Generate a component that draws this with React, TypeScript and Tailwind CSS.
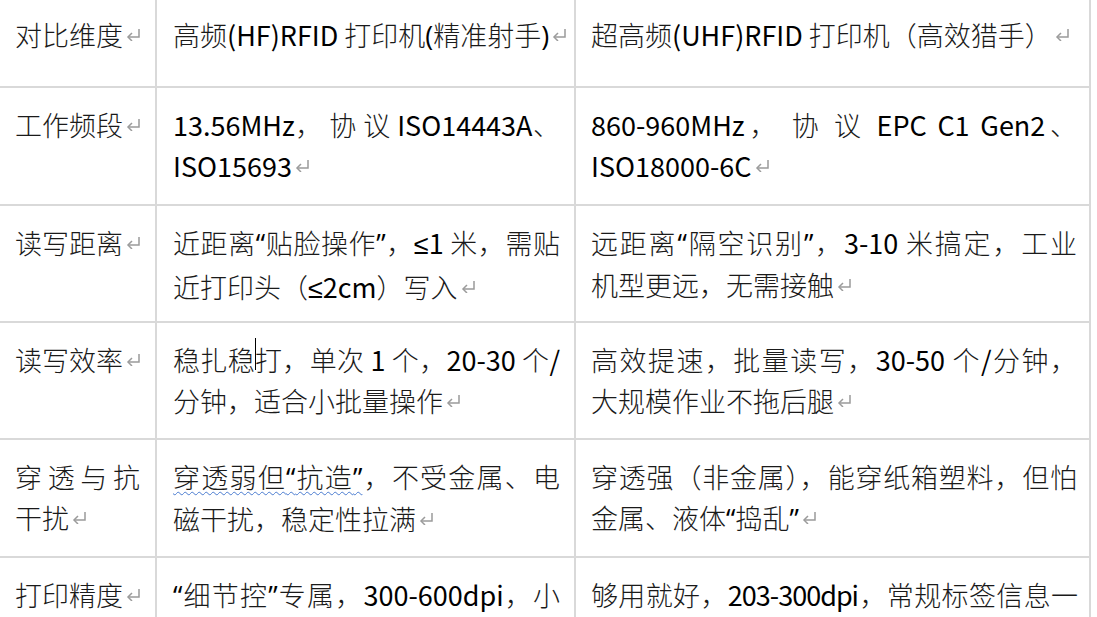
import type { ReactNode } from "react";

const Ret = () => (
  <svg
    className="ml-[3px] inline-block h-[13px] w-[15px] align-[5px]"
    viewBox="0 0 15 13"
    fill="none"
    stroke="#9b9b9b"
    strokeWidth={1.5}
  >
    <path d="M13 1v8H2" />
    <path d="M6 5L2 9l4 4" />
  </svg>
);

// latin runs get a regular weight, like the Calibri parts of the doc
const fmt = (s: string): ReactNode[] =>
  s.split(/([\x21-\x7E]+)/).map((p, i) =>
    /[\x21-\x7E]/.test(p) ? (
      <span key={i} className="font-normal text-black">
        {p}
      </span>
    ) : (
      p
    ),
  );

const Q = ({ children }: { children: ReactNode }) => (
  <span className="font-['Open_Sans'] font-normal text-black">{children}</span>
);

const Le = () => <span className="font-['Liberation_Sans'] font-normal text-black">≤</span>;

const Caret = () => (
  <span className="relative">
    <span className="absolute left-0 top-[-2px] h-[32px] w-px bg-black" />
  </span>
);

type Line = string | ReactNode;

function Cell({ lines, first, pad, clip, cont }: { lines: Line[]; first?: boolean; pad: string; clip?: boolean; cont?: boolean }) {
  return (
    <div
      className={`border-b-2 border-r-2 border-[#d9d9d9] ${first ? "pt-[14px]" : "pt-[16px]"} ${pad} ${clip ? "overflow-hidden" : ""}`}
    >
      {lines.map((l, i) => {
        const last = i === lines.length - 1 && !cont;
        return (
          <div
            key={i}
            className={`whitespace-nowrap ${last ? "text-left" : "text-justify [text-align-last:justify]"}`}
          >
            {typeof l === "string" ? fmt(l) : l}
            {last && <Ret />}
          </div>
        );
      })}
    </div>
  );
}

const rows: { h: string; cont?: boolean; cells: Line[][] }[] = [
  {
    h: "h-[88px]",
    cells: [
      ["对比维度"],
      [<>{fmt("高频(HF)RFID 打印机")}<Q>(</Q>精准射手<Q>)</Q></>],
      ["超高频(UHF)RFID 打印机（高效猎手）"],
    ],
  },
  {
    h: "h-[118px]",
    cells: [
      ["工作频段"],
      ["13.56MHz， 协 议 ISO14443A、", "ISO15693"],
      ["860-960MHz， 协 议  EPC  C1  Gen2、", "ISO18000-6C"],
    ],
  },
  {
    h: "h-[117px]",
    cells: [
      ["读写距离"],
      [
        <>近距离<Q>“</Q>贴脸操作<Q>”</Q>，<Le />{fmt("1 米，需贴")}</>,
        <>近打印头（<Le />{fmt("2cm）写入")}</>,
      ],
      [
        <>远距离<Q>“</Q>隔空识别<Q>”</Q>，{fmt("3-10 米搞定，工业")}</>,
        "机型更远，无需接触",
      ],
    ],
  },
  {
    h: "h-[117px]",
    cells: [
      ["读写效率"],
      [<>稳扎稳<Caret />打，{fmt("单次 1 个，20-30 个/")}</>, "分钟，适合小批量操作"],
      ["高效提速，批量读写，30-50 个/分钟，", "大规模作业不拖后腿"],
    ],
  },
  {
    h: "h-[118px]",
    cells: [
      ["穿透与抗", "干扰"],
      [
        <>
          <span className="underline decoration-wavy decoration-[#4a7bd0] decoration-1 underline-offset-[3px]">
            穿透弱但<Q>“</Q>抗造<Q>”</Q>
          </span>
          ，不受金属、电
        </>,
        "磁干扰，稳定性拉满",
      ],
      ["穿透强（非金属），能穿纸箱塑料，但怕", <>金属、液体<Q>“</Q>捣乱<Q>”</Q></>],
    ],
  },
  {
    h: "h-[120px]",
    cont: true,
    cells: [
      ["打印精度"],
      [<><Q>“</Q>细节控<Q>”</Q>专属，{fmt("300-600dpi，小")}</>],
      [<span className="tracking-[-1px]">{fmt("够用就好，203-300dpi，常规标签信息一")}</span>],
    ],
  },
];

export default function App() {
  return (
    <div className="h-[617px] w-[1097px] overflow-hidden bg-white font-['Noto_Sans_CJK_SC',sans-serif] text-[27px] font-light leading-[41px] text-[#1a1a1a]">
      <div className="grid w-[1091px] grid-cols-[157px_419px_515px]">
        {rows.map((r, ri) => (
          <div key={ri} className={`col-span-3 grid grid-cols-subgrid ${r.h}`}>
            <Cell lines={r.cells[0]} first={ri === 0} pad="pl-[15px] pr-[15px]" />
            <Cell lines={r.cells[1]} first={ri === 0} pad="pl-[16px] pr-[14px]" clip={ri === 0} cont={r.cont} />
            <Cell lines={r.cells[2]} first={ri === 0} pad="pl-[15px] pr-[12px]" cont={r.cont} />
          </div>
        ))}
      </div>
    </div>
  );
}
